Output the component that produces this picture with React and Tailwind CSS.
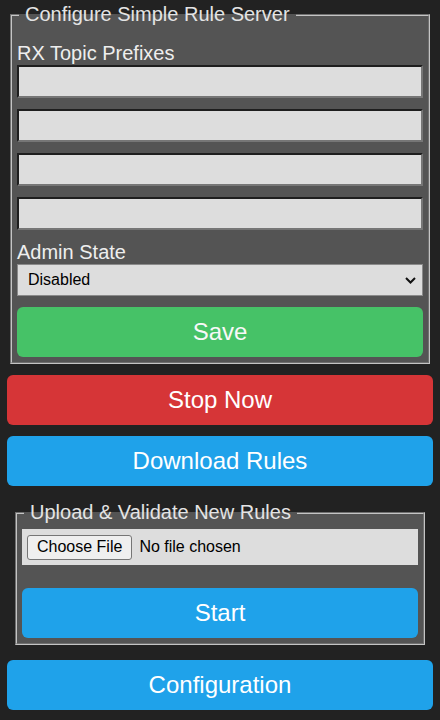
import React from "react";

function Chevron() {
  return (
    <svg width="11" height="7" viewBox="0 0 11 7" className="pointer-events-none absolute right-[7px] top-[13px]">
      <path d="M1 1 L5.5 5.5 L10 1" fill="none" stroke="#111" strokeWidth="2" />
    </svg>
  );
}

const inputCls =
  "block w-full h-[33px] mb-[11px] bg-[#dddddd] border-2 border-t-[#1e1e1e] border-l-[#1e1e1e] border-r-[#767676] border-b-[#767676] outline-none";

export default function App() {
  return (
    <div className="min-h-screen bg-[#222222] px-[7px] pt-[3px] pb-[10px] font-['Liberation_Sans',Arial,sans-serif]">
      <fieldset className="mx-[3px] border-2 [border-style:groove] border-[#c4c4c4] bg-[#545454] px-[5px] pt-[16px] pb-[5px]">
        <legend className="ml-[2px] px-[6px] text-[20px] leading-[23px] text-[#e4e4e4]">
          Configure Simple Rule Server
        </legend>
        <label className="block text-[20px] leading-[23px] text-[#eeeeee]">RX Topic Prefixes</label>
        <input className={inputCls} />
        <input className={inputCls} />
        <input className={inputCls} />
        <input className={inputCls} />
        <label className="block text-[20px] leading-[23px] text-[#eeeeee]">Admin State</label>
        <div className="relative mb-[11px]">
          <select className="block w-full h-[32px] appearance-none bg-[#dddddd] border border-[#8a8a8a] pl-[10px] text-[16px] text-black outline-none">
            <option>Disabled</option>
            <option>Enabled</option>
          </select>
          <Chevron />
        </div>
        <button className="block w-full h-[50px] rounded-[6px] bg-[#46c267] text-[24px] text-[#f8f8f8]">
          Save
        </button>
      </fieldset>

      <button className="mt-[11px] block w-full h-[50px] rounded-[6px] bg-[#d63537] text-[24px] text-white">
        Stop Now
      </button>
      <button className="mt-[11px] block w-full h-[50px] rounded-[6px] bg-[#1fa2ea] text-[24px] text-white">
        Download Rules
      </button>

      <fieldset className="mt-[15px] mx-[8px] border-2 [border-style:groove] border-[#c4c4c4] bg-[#545454] px-[5px] pt-[5px] pb-[5px]">
        <legend className="ml-[2px] px-[6px] text-[20px] leading-[23px] text-[#e4e4e4]">
          Upload &amp; Validate New Rules
        </legend>
        <div className="flex h-[36px] items-center bg-[#dddddd] px-[5px]">
          <button className="h-[25px] rounded-[3px] border border-[#767676] bg-[#efefef] px-[9px] text-[16px] leading-[20px] text-black">
            Choose File
          </button>
          <span className="ml-[7px] text-[16px] text-black">No file chosen</span>
        </div>
        <button className="mt-[23px] block w-full h-[50px] rounded-[6px] bg-[#1fa2ea] text-[24px] text-white">
          Start
        </button>
      </fieldset>

      <button className="mt-[15px] block w-full h-[50px] rounded-[6px] bg-[#1fa2ea] text-[24px] text-white">
        Configuration
      </button>
    </div>
  );
}
